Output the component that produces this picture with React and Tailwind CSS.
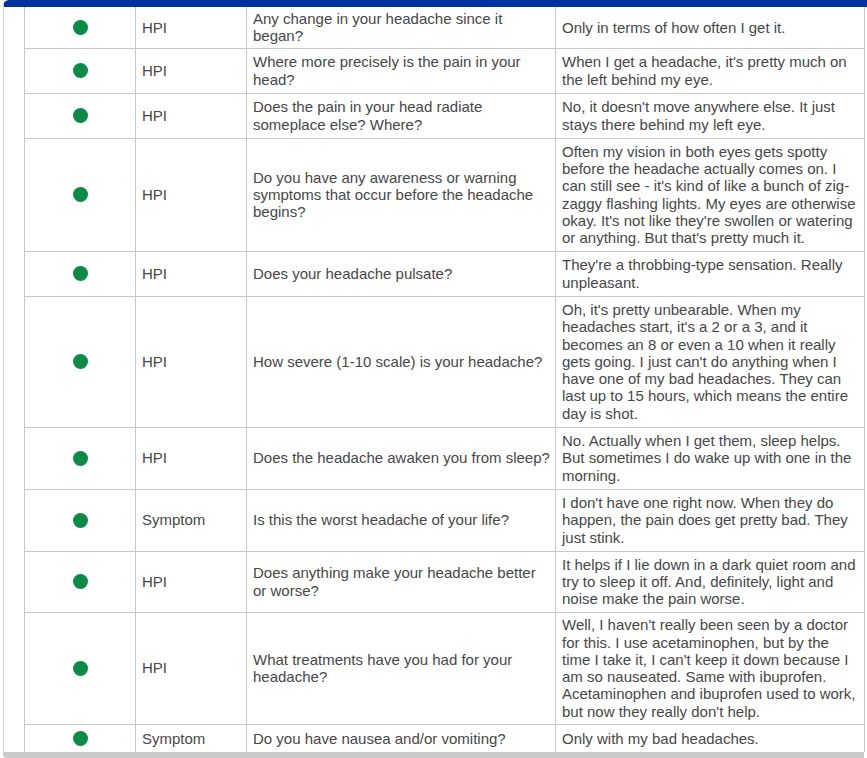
import React from 'react';

const rows = [
  { h: 'h-[41px]', type: 'HPI', q: 'Any change in your headache since it began?', a: 'Only in terms of how often I get it.' },
  { h: 'h-[45px]', type: 'HPI', q: 'Where more precisely is the pain in your head?', a: "When I get a headache, it's pretty much on the left behind my eye." },
  { h: 'h-[45px]', type: 'HPI', q: 'Does the pain in your head radiate someplace else? Where?', a: "No, it doesn't move anywhere else. It just stays there behind my left eye." },
  {
    h: 'h-[113px]',
    type: 'HPI',
    q: 'Do you have any awareness or warning symptoms that occur before the headache begins?',
    a: "Often my vision in both eyes gets spotty before the headache actually comes on. I can still see - it's kind of like a bunch of zig-zaggy flashing lights. My eyes are otherwise okay. It's not like they're swollen or watering or anything. But that's pretty much it.",
  },
  { h: 'h-[45px]', type: 'HPI', q: 'Does your headache pulsate?', a: "They're a throbbing-type sensation. Really unpleasant." },
  {
    h: 'h-[131px]',
    type: 'HPI',
    q: 'How severe (1-10 scale) is your headache?',
    a: "Oh, it's pretty unbearable. When my headaches start, it's a 2 or a 3, and it becomes an 8 or even a 10 when it really gets going. I just can't do anything when I have one of my bad headaches. They can last up to 15 hours, which means the entire day is shot.",
  },
  {
    h: 'h-[62px]',
    type: 'HPI',
    q: 'Does the headache awaken you from sleep?',
    a: 'No. Actually when I get them, sleep helps. But sometimes I do wake up with one in the morning.',
  },
  {
    h: 'h-[62px]',
    type: 'Symptom',
    q: 'Is this the worst headache of your life?',
    a: "I don't have one right now. When they do happen, the pain does get pretty bad. They just stink.",
  },
  {
    h: 'h-[61px]',
    type: 'HPI',
    q: 'Does anything make your headache better or worse?',
    a: 'It helps if I lie down in a dark quiet room and try to sleep it off. And, definitely, light and noise make the pain worse.',
  },
  {
    h: 'h-[112px]',
    type: 'HPI',
    q: 'What treatments have you had for your headache?',
    a: "Well, I haven't really been seen by a doctor for this. I use acetaminophen, but by the time I take it, I can't keep it down because I am so nauseated. Same with ibuprofen. Acetaminophen and ibuprofen used to work, but now they really don't help.",
  },
  { h: 'h-[28px]', type: 'Symptom', q: 'Do you have nausea and/or vomiting?', a: 'Only with my bad headaches.' },
];

const App = () => {
  return (
    <div className="w-[867px] h-[758px] bg-white overflow-hidden font-['Liberation_Sans',Arial,sans-serif]">
      <div className="ml-[3px] w-[864px] border-t-[7px] border-t-[#0033a0] border-l border-l-[#cfcfcf] rounded-tl-[6px] pl-[20px]">
        <table className="table-fixed border-collapse w-[840px] text-[15px] leading-[17.25px] text-[#474747]">
          <colgroup>
            <col className="w-[111px]" />
            <col className="w-[111px]" />
            <col className="w-[309px]" />
            <col className="w-[309px]" />
          </colgroup>
          <tbody>
            {rows.map((row, i) => (
              <tr key={i} className={row.h}>
                <td className={`border-x border-[#c8c8c8] align-middle ${i > 0 ? 'border-t' : ''}`}>
                  <div className="mx-auto w-[15px] h-[15px] rounded-full bg-[#0b8b47]" />
                </td>
                <td className={`border-x border-[#c8c8c8] align-middle pl-[6px] ${i > 0 ? 'border-t' : ''}`}>{row.type}</td>
                <td className={`border-x border-[#c8c8c8] align-middle pl-[6px] pr-[4px] ${i > 0 ? 'border-t' : ''}`}>{row.q}</td>
                <td className={`border-x border-[#c8c8c8] align-middle pl-[6px] pr-[6px] ${i > 0 ? 'border-t' : ''}`}>{row.a}</td>
              </tr>
            ))}
          </tbody>
        </table>
      </div>
      <div className="ml-[3px] w-[861px] h-[6px] bg-[#cacaca] rounded-bl-[4px]" />
    </div>
  );
};

export default App;
